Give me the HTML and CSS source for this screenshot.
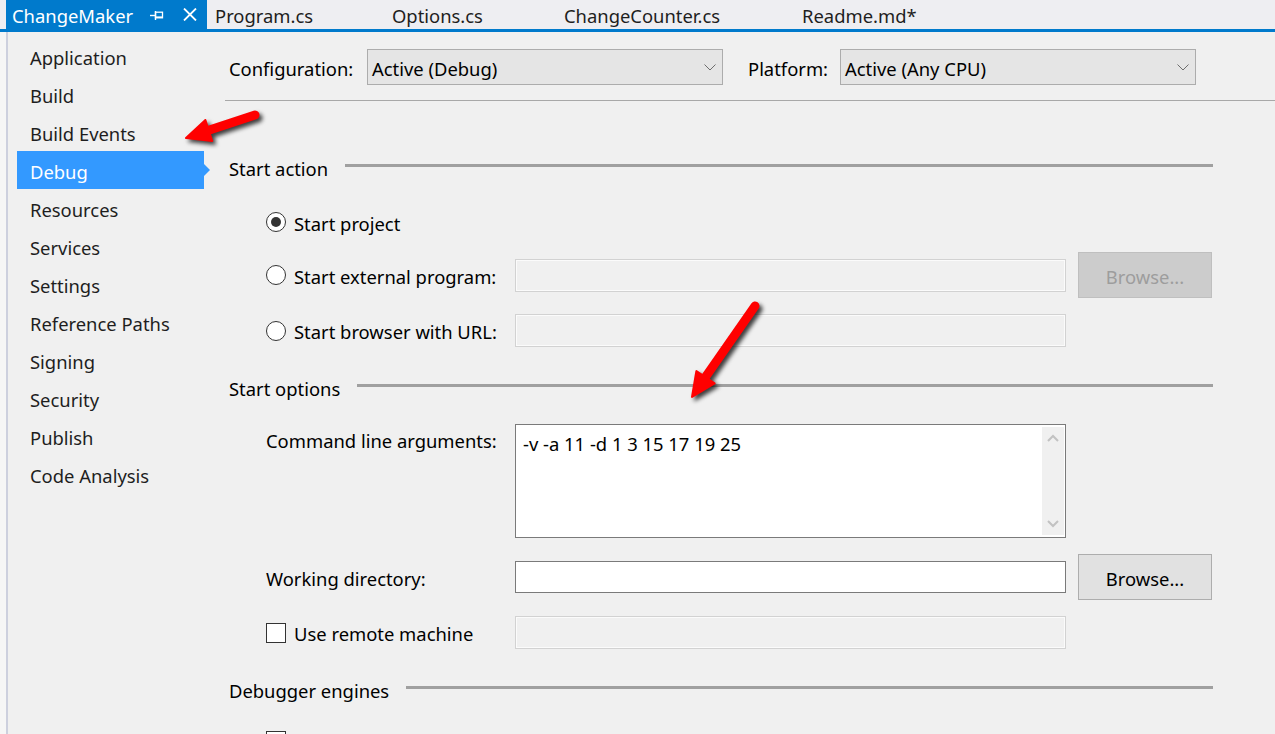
FILE: index.html
```html
<!DOCTYPE html>
<html lang="en">
<head>
<meta charset="utf-8">
<title>ChangeMaker - Debug</title>
<link rel="stylesheet" href="styles.css">
</head>
<body>
<div class="window">
  <div class="tabbar">
    <div class="tab tab-active">
      <span class="tab-title">ChangeMaker</span>
      <svg class="pin-icon" width="14" height="10" viewBox="0 0 14 10">
        <path d="M0 5.5H5" stroke="#fff" stroke-width="1.4" fill="none"/>
        <path d="M5.5 1V10" stroke="#fff" stroke-width="1.4" fill="none"/>
        <rect x="5.5" y="2.2" width="7" height="5.6" stroke="#fff" stroke-width="1.3" fill="none"/>
        <path d="M5.5 7.2H13" stroke="#fff" stroke-width="1.6" fill="none"/>
      </svg>
      <svg class="close-icon" width="14" height="13" viewBox="0 0 14 13">
        <path d="M1 0.5L13 12.5M13 0.5L1 12.5" stroke="#fff" stroke-width="1.8" fill="none"/>
      </svg>
    </div>
    <div class="tab tab-program">Program.cs</div>
    <div class="tab tab-options">Options.cs</div>
    <div class="tab tab-counter">ChangeCounter.cs</div>
    <div class="tab tab-readme">Readme.md*</div>
  </div>

  <div class="panel">
    <nav class="sidebar">
      <div class="nav-item">Application</div>
      <div class="nav-item">Build</div>
      <div class="nav-item">Build Events</div>
      <div class="nav-item selected">Debug</div>
      <div class="nav-item">Resources</div>
      <div class="nav-item">Services</div>
      <div class="nav-item">Settings</div>
      <div class="nav-item">Reference Paths</div>
      <div class="nav-item">Signing</div>
      <div class="nav-item">Security</div>
      <div class="nav-item">Publish</div>
      <div class="nav-item">Code Analysis</div>
    </nav>

    <main class="content">
      <div class="config-row">
        <span class="cfg-label cfg-label-config">Configuration:</span>
        <div class="select">
          <span class="select-text">Active (Debug)</span>
          <svg class="chevron" width="12" height="7" viewBox="0 0 12 7"><path d="M0.5 0.5L6 6L11.5 0.5" stroke="#6d6d6d" stroke-width="1" fill="none"/></svg>
        </div>
        <span class="cfg-label cfg-label-platform">Platform:</span>
        <div class="select">
          <span class="select-text">Active (Any CPU)</span>
          <svg class="chevron" width="12" height="7" viewBox="0 0 12 7"><path d="M0.5 0.5L6 6L11.5 0.5" stroke="#6d6d6d" stroke-width="1" fill="none"/></svg>
        </div>
      </div>
      <div class="config-rule"></div>

      <div class="pane">
        <div class="section-head head-action"><span>Start action</span><div class="head-line"></div></div>

        <div class="row row-project">
          <div class="label-cell"><span class="radio checked"></span><span class="label-text">Start project</span></div>
        </div>

        <div class="row row-external">
          <div class="label-cell"><span class="radio"></span><span class="label-text">Start external program:</span></div>
          <div class="field field-disabled"></div>
          <div class="button button-disabled">Browse...</div>
        </div>

        <div class="row row-url">
          <div class="label-cell"><span class="radio"></span><span class="label-text">Start browser with URL:</span></div>
          <div class="field field-disabled"></div>
        </div>

        <div class="section-head head-options"><span>Start options</span><div class="head-line"></div></div>

        <div class="row row-cmd">
          <div class="label-cell label-top">Command line arguments:</div>
          <div class="textarea">
            <div class="textarea-text">-v -a 11 -d 1 3 15 17 19 25</div>
            <div class="scrollbar">
              <svg width="12" height="8" viewBox="0 0 12 8"><path d="M1 7L6 2L11 7" stroke="#c2c2c2" stroke-width="2" fill="none"/></svg>
              <svg width="12" height="8" viewBox="0 0 12 8"><path d="M1 1L6 6L11 1" stroke="#c2c2c2" stroke-width="2" fill="none"/></svg>
            </div>
          </div>
        </div>

        <div class="row row-workdir">
          <div class="label-cell"><span class="label-text">Working directory:</span></div>
          <div class="field field-active"></div>
          <div class="button">Browse...</div>
        </div>

        <div class="row row-remote">
          <div class="label-cell"><span class="checkbox"></span><span class="label-text">Use remote machine</span></div>
          <div class="field field-disabled"></div>
        </div>

        <div class="section-head head-debugger"><span>Debugger engines</span><div class="head-line"></div></div>

        <div class="row row-last">
          <div class="label-cell"><span class="checkbox"></span></div>
        </div>
      </div>
    </main>
  </div>
</div>

<svg class="annotations" width="1275" height="734" viewBox="0 0 1275 734">
  <g fill="#ff0000" stroke="#ff0000">
    <path d="M255 115L208 130.5" stroke-width="9" stroke-linecap="round" fill="none"/>
    <polygon points="186,138 212.2,141 205.4,120" stroke-width="2" stroke-linejoin="round"/>
    <path d="M755 306L705.5 377" stroke-width="9" stroke-linecap="round" fill="none"/>
    <polygon points="692,397 714.6,383.4 696.4,371" stroke-width="2" stroke-linejoin="round"/>
  </g>
</svg>
</body>
</html>
```

FILE: styles.css
```css
* {
  box-sizing: border-box;
}

html, body {
  margin: 0;
  padding: 0;
}

body {
  width: 1275px;
  height: 734px;
  overflow: hidden;
  background: #f6f6f6;
  font-family: "Noto Sans", "Open Sans", sans-serif;
  font-size: 18.4px;
  color: #000;
}

.window {
  display: flex;
  flex-direction: column;
  height: 734px;
}

/* ---------- tab bar ---------- */
.tabbar {
  display: flex;
  height: 32px;
  padding-left: 6px;
  background: #eeeef2;
  border-bottom: 3px solid #007acc;
  color: #1e1e1e;
  line-height: 29px;
  white-space: nowrap;
}

.tab {
  padding-left: 8px;
  padding-top: 1px;
  height: 29px;
}

.tab-active {
  display: flex;
  align-items: center;
  width: 201px;
  height: 29px;
  padding-left: 6px;
  padding-top: 0;
  background: #007acc;
  color: #fff;
}

.tab-title {
  width: 138px;
  padding-top: 1px;
}

.pin-icon {
  margin-top: 1px;
}

.close-icon {
  margin-left: 19px;
  margin-top: -1px;
}

.tab-program { width: 177px; }
.tab-options { width: 172px; }
.tab-counter { width: 238px; }
.tab-readme  { flex: 1; }

/* ---------- panel ---------- */
.panel {
  flex: 1;
  display: flex;
  margin-left: 6px;
  background: #f0f0f0;
  border-left: 2px solid #cdd0de;
}

.sidebar {
  width: 217px;
  flex: none;
  padding-top: 5px;
}

.nav-item {
  position: relative;
  width: 187px;
  height: 38px;
  margin-left: 9px;
  padding-left: 13px;
  padding-top: 3px;
  line-height: 35px;
  color: #1e1e1e;
}

.nav-item.selected {
  background: #3399ff;
  color: #fff;
}

.nav-item.selected::after {
  content: "";
  position: absolute;
  right: -6px;
  top: 13px;
  border-left: 6px solid #3399ff;
  border-top: 6px solid transparent;
  border-bottom: 6px solid transparent;
}

/* ---------- content ---------- */
.content {
  flex: 1;
  display: flex;
  flex-direction: column;
}

.config-row {
  display: flex;
  align-items: center;
  padding: 17px 0 0 4px;
}

.cfg-label {
  flex: none;
  padding-top: 3px;
}

.cfg-label-config {
  width: 138px;
}

.cfg-label-platform {
  width: 92px;
  margin-left: 25px;
}

.select {
  display: flex;
  align-items: center;
  justify-content: space-between;
  width: 356px;
  height: 36px;
  padding: 0 6px 0 4px;
  background: #e5e5e5;
  border: 1px solid #acacac;
}

.select-text {
  padding-top: 3px;
}

.config-rule {
  height: 1px;
  margin-top: 15px;
  background: #a8a8a8;
}

.pane {
  width: 984px;
  margin-left: 4px;
}

.section-head {
  display: flex;
  align-items: center;
  height: 30px;
}

.head-line {
  flex: 1;
  height: 3px;
  margin-left: 17px;
  margin-bottom: 6px;
  background: #a0a0a0;
}

.head-action { margin-top: 52px; }
.head-options { margin-top: 26px; }
.head-debugger { margin-top: 26px; }

.row {
  display: flex;
  align-items: center;
  padding-left: 37px;
}

.label-cell {
  display: flex;
  align-items: center;
  width: 249px;
  flex: none;
}

.label-text {
  padding-top: 2px;
}

.row-project { margin-top: 24px; height: 30px; }
.row-external { margin-top: 15px; height: 46px; }
.row-url { margin-top: 16px; height: 33px; }
.row-cmd { margin-top: 21px; height: 114px; align-items: flex-start; }
.row-workdir { margin-top: 16px; height: 46px; }
.row-remote { margin-top: 16px; height: 33px; }
.row-last { margin-top: 26px; height: 20px; }

.label-top {
  line-height: 32px;
  padding-top: 1px;
}

.radio {
  width: 20px;
  height: 20px;
  margin-right: 8px;
  border: 1px solid #333;
  border-radius: 50%;
  background: #fff;
  display: flex;
  align-items: center;
  justify-content: center;
  flex: none;
}

.radio.checked::after {
  content: "";
  width: 10px;
  height: 10px;
  border-radius: 50%;
  background: #333;
}

.checkbox {
  width: 20px;
  height: 20px;
  margin-right: 8px;
  border: 1px solid #333;
  background: #fff;
  flex: none;
}

.field {
  width: 551px;
  flex: none;
}

.field-disabled {
  height: 33px;
  border: 1px solid #d2d2d2;
  box-shadow: inset 0 0 0 1px #fbfbfb;
  background: #f0f0f0;
}

.field-active {
  height: 32px;
  border: 1px solid #7a7a7a;
  background: #fff;
}

.button {
  width: 134px;
  height: 46px;
  margin-left: 12px;
  padding-top: 3px;
  flex: none;
  display: flex;
  align-items: center;
  justify-content: center;
  background: #e1e1e1;
  border: 1px solid #adadad;
  color: #000;
}

.button-disabled {
  background: #cccccc;
  border-color: #bfbfbf;
  color: #9d9d9d;
}

.textarea {
  display: flex;
  width: 551px;
  height: 114px;
  flex: none;
  background: #fff;
  border: 1px solid #7a7a7a;
}

.textarea-text {
  flex: 1;
  padding: 6px 0 0 7px;
  line-height: 26px;
}

.scrollbar {
  width: 22px;
  margin: 2px 1px 2px 0;
  background: #f0f0f0;
  display: flex;
  flex-direction: column;
  justify-content: space-between;
  align-items: center;
  padding: 7px 0 7px;
}

/* ---------- annotation arrows ---------- */
.annotations {
  position: absolute;
  top: 0;
  left: 0;
  pointer-events: none;
  filter: drop-shadow(3px 3px 2px rgba(0, 0, 0, 0.75));
}
```
